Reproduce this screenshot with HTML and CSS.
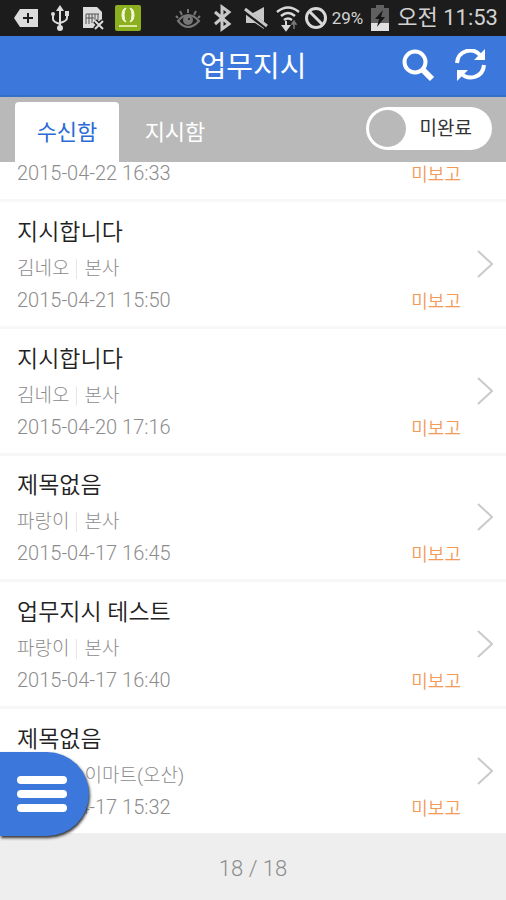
FILE: index.html
```html
<!DOCTYPE html>
<html lang="ko">
<head>
<meta charset="utf-8">
<meta name="viewport" content="width=device-width, initial-scale=1">
<title>업무지시</title>
<link rel="stylesheet" href="styles.css">
</head>
<body>
<div class="status-bar">
  <div class="notices">
    <svg width="28" height="28" viewBox="0 0 28 28"><path d="M2 14 8 5h18v18H8z" fill="#dcdcdc"/><path d="M16 9v10M11 14h10" stroke="#1c1c1c" stroke-width="2"/></svg>
    <svg width="28" height="28" viewBox="0 0 28 28" fill="none" stroke="#dcdcdc" stroke-width="2"><path d="M14 24V5M7 11v4q0 3 7 5M21 10v4q0 3-7 5"/><path d="m14 1 4 6h-8z" fill="#dcdcdc" stroke="none"/><circle cx="14" cy="24" r="3" fill="#dcdcdc" stroke="none"/><circle cx="7" cy="10" r="2" fill="#dcdcdc" stroke="none"/><path d="M19 7h4v5h-4z" fill="#dcdcdc" stroke="none"/></svg>
    <svg width="28" height="28" viewBox="0 0 28 28"><path d="M3 3h14l5 5v16H3z" fill="#dcdcdc"/><path d="M6 10h13M6 10v10M9 10v10M12 10v9M15 10v6M18 10v6M6 14h8" stroke="#555" stroke-width="1" fill="none"/><path d="m15 17 8 8m0-8-8 8" stroke="#1c1c1c" stroke-width="5"/><path d="m15 17 8 8m0-8-8 8" stroke="#dcdcdc" stroke-width="2"/></svg>
    <svg width="28" height="28" viewBox="0 0 28 28"><rect x="1" y="1" width="26" height="26" rx="2" fill="#8caf20"/><path d="M12 4q-4 1-4 7t4 7q-2-2-2-7t2-7zM16 4q4 1 4 7t-4 7q2-2 2-7t-2-7z" fill="#f3f8dc" stroke="#f3f8dc"/><path d="M5 22h18" stroke="#dceaa6" stroke-width="2"/></svg>
  </div>
  <div class="system">
    <svg width="30" height="28" viewBox="0 0 30 28" fill="none" stroke="#777" stroke-width="2"><path d="M5 17q10-12 21 0-11 12-21 0z"/><circle cx="15" cy="16" r="4" fill="#777"/><path d="M15 9V5M9 11 7 7M21 11l2-4M5 14l-2-2M25 14l2-2"/><circle cx="16" cy="15" r="1" fill="#1c1c1c" stroke="none"/></svg>
    <svg width="28" height="28" viewBox="0 0 28 28" fill="none" stroke="#c8c8c8" stroke-width="3"><path d="m7 8 14 12-7 5V3l7 5L7 20"/></svg>
    <svg width="30" height="28" viewBox="0 0 30 28"><path d="M5 9h7l11-6v22l-9-6H5z" fill="#c8c8c8"/><path d="m3 6 24 18" stroke="#1c1c1c" stroke-width="5"/><path d="m4 5 22 17" stroke="#c8c8c8" stroke-width="3"/></svg>
    <svg width="24" height="28" viewBox="0 0 24 28" fill="none" stroke="#d8d8d8" stroke-width="2.5"><path d="M1 8q11-9 22 0M5 12q7-6 14 0M8 16q4-3 8 0"/><path d="M10 17v6M7 22h6l-3 4z" stroke-width="2" fill="#d8d8d8"/><path d="M18 25v-6m-2 1 2-3 2 3z" stroke="#777" stroke-width="1.500" fill="#777"/></svg>
    <svg width="22" height="28" viewBox="0 0 22 28" fill="none" stroke="#d8d8d8" stroke-width="3"><circle cx="11" cy="14" r="9.500"/><path d="m4 7 14 14"/></svg>
    <span class="percent">29%</span>
    <svg width="24" height="28" viewBox="0 0 24 28"><path d="M8 1h8v3h5v23H3V4h5z" fill="#606060"/><path d="M3 19h18v8H3z" fill="#e0e0e0"/><path d="M15 6 7 15h4l-2 8 8-10h-4z" fill="#161616"/></svg>
    <span class="clock">오전 11:53</span>
  </div>
</div>

<header class="app-bar">
  <h1>업무지시</h1>
  <div class="actions">
    <button type="button" aria-label="검색"><svg width="34" height="34" viewBox="0 0 34 34" fill="none" stroke="#fff"><circle cx="13" cy="13" r="10.500" stroke-width="4"/><path d="m20 20 10 10" stroke-width="6"/></svg></button>
    <button type="button" aria-label="새로고침"><svg width="34" height="34" viewBox="0 0 34 34" fill="none" stroke="#fff" stroke-width="4"><path d="M3 14C4 1 19-2 26 6M30 16C29 29 14 32 7 24"/><path d="M31 0v11H20zM3 32V21h11z" fill="#fff" stroke="none"/></svg></button>
  </div>
</header>

<nav class="tab-bar">
  <button type="button" class="tab active">수신함</button>
  <button type="button" class="tab">지시함</button>
  <label class="toggle"><input type="checkbox"><span>미완료</span></label>
</nav>

<main class="orders">
  <a class="order partial" href="#"><div class="info"><div class="foot"><time>2015-04-22 16:33</time><span class="state">미보고</span></div></div></a>
  <a class="order" href="#">
    <div class="info"><h2>지시합니다</h2><div class="from"><span>김네오</span><span>본사</span></div><div class="foot"><time>2015-04-21 15:50</time><span class="state">미보고</span></div></div>
    <svg class="chevron" viewBox="0 0 16 28"><path d="m1 1 14 13L1 27"/></svg>
  </a>
  <a class="order" href="#">
    <div class="info"><h2>지시합니다</h2><div class="from"><span>김네오</span><span>본사</span></div><div class="foot"><time>2015-04-20 17:16</time><span class="state">미보고</span></div></div>
    <svg class="chevron" viewBox="0 0 16 28"><path d="m1 1 14 13L1 27"/></svg>
  </a>
  <a class="order" href="#">
    <div class="info"><h2>제목없음</h2><div class="from"><span>파랑이</span><span>본사</span></div><div class="foot"><time>2015-04-17 16:45</time><span class="state">미보고</span></div></div>
    <svg class="chevron" viewBox="0 0 16 28"><path d="m1 1 14 13L1 27"/></svg>
  </a>
  <a class="order" href="#">
    <div class="info"><h2>업무지시 테스트</h2><div class="from"><span>파랑이</span><span>본사</span></div><div class="foot"><time>2015-04-17 16:40</time><span class="state">미보고</span></div></div>
    <svg class="chevron" viewBox="0 0 16 28"><path d="m1 1 14 13L1 27"/></svg>
  </a>
  <a class="order" href="#">
    <div class="info"><h2>제목없음</h2><div class="from"><span>파랑이</span><span>이마트(오산)</span></div><div class="foot"><time>2015-04-17 15:32</time><span class="state">미보고</span></div></div>
    <svg class="chevron" viewBox="0 0 16 28"><path d="m1 1 14 13L1 27"/></svg>
  </a>
</main>

<footer class="count">18 / 18</footer>

<button type="button" class="menu" aria-label="메뉴"><svg width="52" height="38" viewBox="0 0 52 38" stroke="#fff" stroke-width="8" stroke-linecap="round"><path d="M5 5h42M5 19h42M5 33h42"/></svg></button>
</body>
</html>
```
FILE: styles.css
```css
* { box-sizing: border-box; }

body {
  margin: 0;
  min-height: 100vh;
  display: flex;
  flex-direction: column;
  background: #fff;
  font-family: Roboto, "Noto Sans CJK KR", sans-serif;
}

button {
  padding: 0;
  border: 0;
  background: none;
  font-family: inherit;
  cursor: pointer;
}

svg { display: block; flex: none; }

/* Device status */
.status-bar {
  height: 36px;
  padding: 0 8px 0 12px;
  display: flex;
  align-items: center;
  justify-content: space-between;
  background: #1c1c1c;
  color: #d2d2d2;
}

.notices { display: flex; gap: 6px; }

.system {
  display: flex;
  align-items: center;
  gap: 5px;
  white-space: nowrap;
}

.percent { font-size: 17px; }
.clock { font-size: 22px; line-height: 32px; }

/* Title bar */
.app-bar {
  height: 61px;
  padding: 0 18px;
  display: grid;
  grid-template-columns: 1fr auto 1fr;
  align-items: center;
  background: #3c78dc;
  border-bottom: 2px solid #356fcb;
  color: #fff;
}

.app-bar h1 {
  grid-column: 2;
  margin: 0;
  padding-top: 2px;
  font-size: 29px;
  font-weight: 400;
  line-height: 40px;
}

.actions {
  display: flex;
  justify-content: flex-end;
  gap: 18px;
}

/* Tabs and filter */
.tab-bar {
  height: 65px;
  padding: 5px 14px 0 15px;
  display: flex;
  background: #b9b9b9;
}

.tab {
  width: 104px;
  margin-right: 4px;
  padding-bottom: 4px;
  border-radius: 4px 4px 0 0;
  color: #fff;
  font-size: 22px;
}

.tab.active {
  background: #fff;
  color: #2c6bd6;
}

.toggle {
  width: 126px;
  height: 43px;
  margin: 5px 0 0 auto;
  padding: 0 20px 0 3px;
  display: flex;
  align-items: center;
  justify-content: space-between;
  border-radius: 22px;
  background: #fff;
  color: #333;
  font-size: 19px;
  line-height: 28px;
}

.toggle input {
  appearance: none;
  width: 37px;
  height: 37px;
  margin: 0;
  border-radius: 50%;
  background: #b9b9b9;
}

/* Order list */
.orders {
  flex: 1;
  display: flex;
  flex-direction: column;
}

.order {
  flex: 1;
  padding: 9px 13px 9px 17px;
  display: flex;
  align-items: center;
  gap: 16px;
  border-bottom: 3px solid #f7f7f7;
  color: #8c8c8c;
  text-decoration: none;
}

.order:last-child { border-bottom: 0; }

.order.partial {
  flex: none;
  height: 40px;
  padding: 0 45px 11px 17px;
  align-items: flex-end;
  overflow: hidden;
}

.info { flex: 1; }

.order h2 {
  margin: 0;
  color: #222;
  font-size: 23px;
  font-weight: 350;
  line-height: 40px;
}

.from {
  display: flex;
  align-items: center;
  font-size: 19px;
  font-weight: 300;
  line-height: 32px;
}

.from span + span {
  margin-left: 7px;
  padding-left: 7px;
  border-left: 1px solid #e6e6e6;
  line-height: 20px;
}

.foot {
  display: flex;
  align-items: flex-end;
  justify-content: space-between;
  font-size: 20px;
  font-weight: 300;
  line-height: 30px;
}

.state {
  color: #f39a58;
  font-size: 18px;
  font-weight: 350;
  line-height: 26px;
}

.chevron {
  width: 16px;
  height: 28px;
  fill: none;
  stroke: #cacaca;
  stroke-width: 2;
}

.count {
  height: 67px;
  padding-top: 4px;
  background: #eee;
  color: #8c8c8c;
  font-size: 22px;
  font-weight: 300;
  line-height: 64px;
  text-align: center;
}

/* Floating menu handle */
.menu {
  position: fixed;
  left: 0;
  bottom: 64px;
  width: 89px;
  height: 84px;
  padding-left: 16px;
  border-radius: 0 42px 42px 0;
  background: #3c78dc;
  box-shadow: 1px 2px 3px #333;
}
```
